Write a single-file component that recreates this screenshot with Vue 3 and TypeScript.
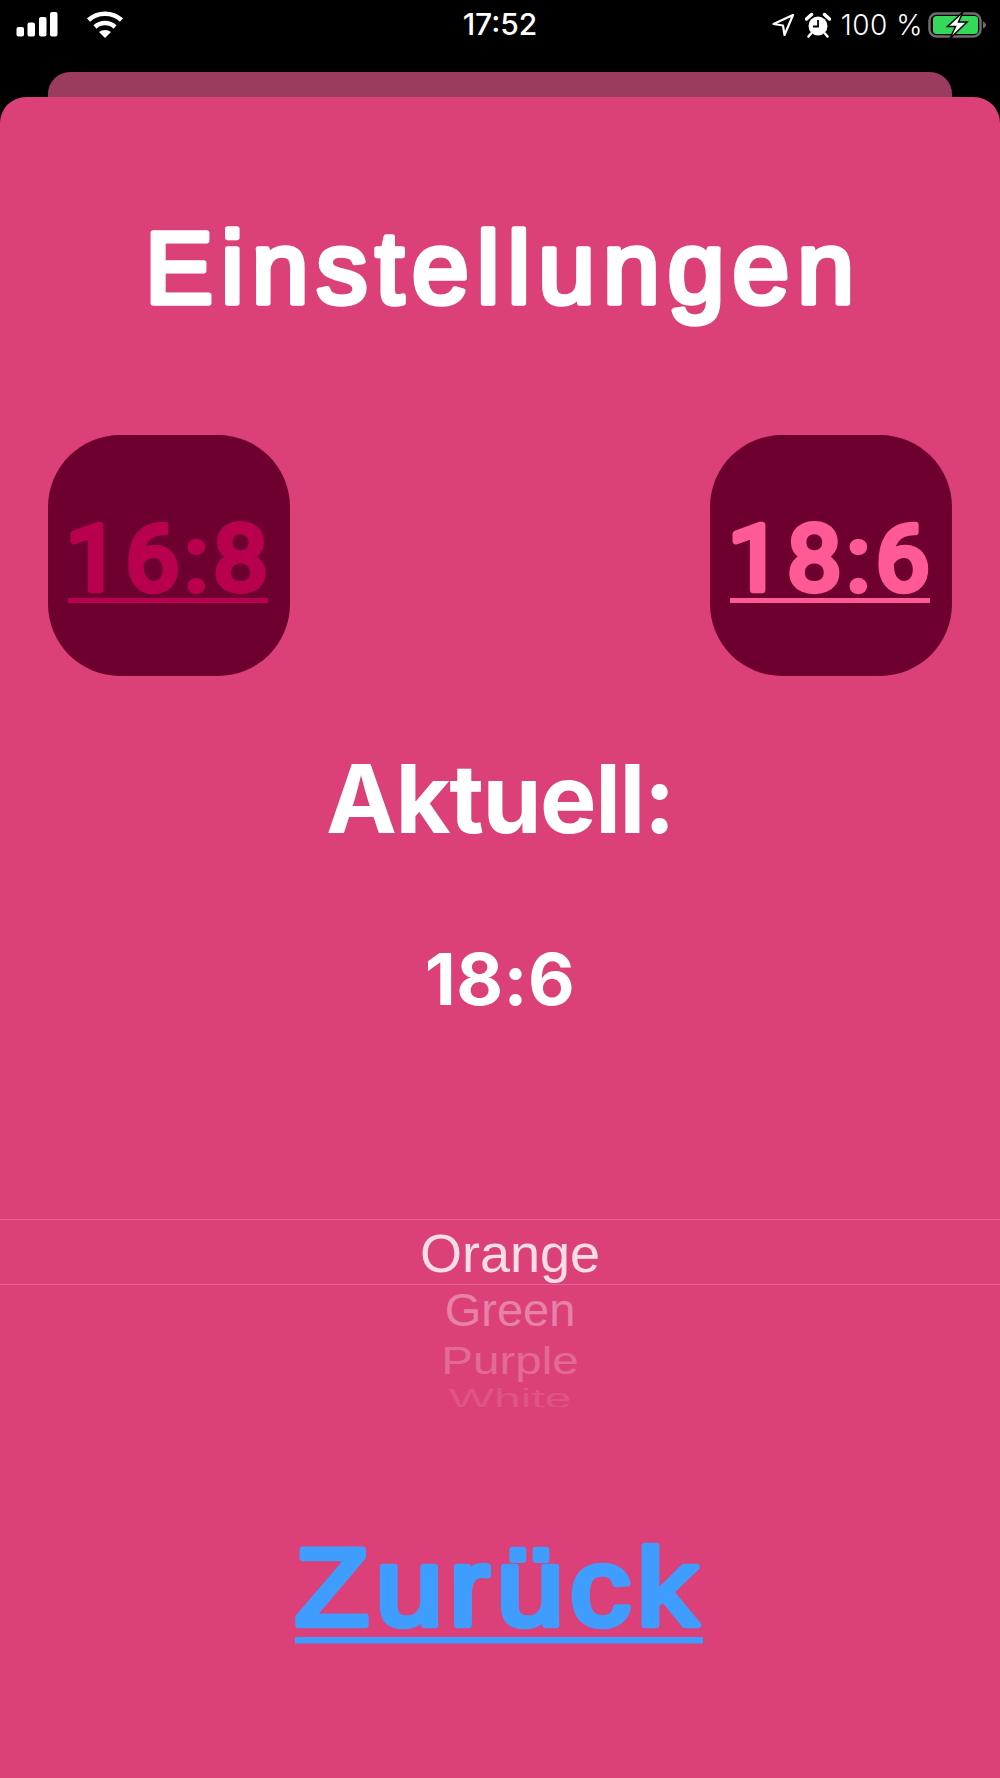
<template>
  <div class="screen">
    <div class="status-bar">
      <div class="status-left">
        <svg class="signal" width="42" height="25" viewBox="0 0 42 25">
          <rect x="0.500" y="15" width="7.500" height="9.500" rx="2" />
          <rect x="11.500" y="10.500" width="7.500" height="14" rx="2" />
          <rect x="23" y="5" width="7.500" height="19.500" rx="2" />
          <rect x="34" y="0" width="7.500" height="24.500" rx="2" />
        </svg>
        <svg class="wifi" width="38" height="28" viewBox="0 0 38 28">
          <path class="wifi-arc" d="M2.500 10C11.500 1.500 26.500 1.500 35.500 10" />
          <path class="wifi-arc" d="M9 17C14.500 11.800 23.500 11.800 29 17" />
          <path d="M13 22C16.500 19.200 21.500 19.200 25 22L19 28Z" fill="#fff" />
        </svg>
      </div>
      <div class="status-time">17:52</div>
      <div class="status-right">
        <svg class="arrow" width="24" height="24" viewBox="0 0 24 24">
          <path class="outline" d="M22 2 2.500 11 12 12.500 13.500 22Z" />
        </svg>
        <svg class="alarm" width="26" height="26" viewBox="0 0 26 26">
          <circle cx="13" cy="14" r="9.500" fill="#fff" />
          <path d="M13 8v6.500H8" class="clock-hand" />
          <path d="M1.500 7 6.500 2.500M24.500 7l-5-4.500" class="clock-bell" />
          <path d="M6 21.500l-2.500 3M20 21.500l2.500 3" class="clock-foot" />
        </svg>
        <span class="battery-text">100 %</span>
        <svg class="battery" width="60" height="28" viewBox="0 0 60 28">
          <rect x="1.500" y="2.500" width="51" height="23" rx="7" class="battery-shell" />
          <rect x="5" y="5" width="45" height="18" rx="3.500" fill="#34d85a" />
          <path d="M55 10.500c2 .8 3 2 3 3.500s-1 2.700-3 3.500Z" fill="#6d6d6d" />
          <path d="M35 1 19.500 15.500h8L22 27.500 39 11h-8.500L35 1Z" fill="#fff" stroke="#000" stroke-width="1.500" />
        </svg>
      </div>
    </div>

    <div class="sheet-back"></div>

    <main class="sheet">
      <svg class="title" width="720" height="140" viewBox="0 0 720 140">
        <text x="5" y="95" textLength="709" class="round">Einstellungen</text>
      </svg>

      <div class="ratio-row">
        <a class="ratio-btn is-off">
          <svg width="242" height="241" viewBox="0 0 242 241">
            <text transform="scale(1.06 1)" x="17" y="155" textLength="190" class="round digits">16:8</text>
            <rect x="20" y="163" width="200" height="5" />
          </svg>
        </a>
        <a class="ratio-btn is-on">
          <svg width="242" height="241" viewBox="0 0 242 241">
            <text transform="scale(1.06 1)" x="17" y="155" textLength="190" class="round digits">18:6</text>
            <rect x="20" y="163" width="200" height="5" />
          </svg>
        </a>
      </div>

      <h2 class="current-label">Aktuell:</h2>
      <p class="current-value">18:6</p>

      <div class="picker">
        <div class="picker-row">
          <span class="opt opt-1">Orange</span>
        </div>
        <span class="opt opt-2">Green</span>
        <span class="opt opt-3">Purple</span>
        <div class="opt-clip"><span class="opt opt-4">White</span></div>
      </div>

      <svg class="back-link" width="440" height="150" viewBox="0 0 440 150">
        <text transform="scale(1.1 1)" x="13.600" y="105" textLength="366" class="round back-text">Zurück</text>
        <rect x="15" y="117" width="408" height="6.500" />
      </svg>
    </main>
  </div>
</template>

<script setup lang="ts">
</script>

<style>
html, body { margin: 0; background: #000; }
</style>

<style scoped>
.screen {
  width: 1000px;
  height: 1778px;
  background: #000;
  overflow: hidden;
  display: flex;
  flex-direction: column;
  font-family: Inter, "Liberation Sans", sans-serif;
}
.status-bar {
  height: 72px;
  display: grid;
  grid-template-columns: 1fr auto 1fr;
  align-items: flex-start;
  padding: 12px 12px 0 16px;
  box-sizing: border-box;
  color: #fff;
}
.status-left { display: flex; gap: 28px; align-items: flex-start; }
.signal rect { fill: #fff; }
.wifi { margin-top: -2px; }
.wifi-arc { fill: none; stroke: #fff; stroke-width: 4.500; }
.status-time { font: 500 30px/24px Inter, sans-serif; margin-left: -4px; }
.status-right { display: flex; justify-content: flex-end; align-items: center; height: 28px; margin-top: -1px; }
.arrow { margin-right: 10px; }
.alarm { margin-right: 10px; }
.battery-text { font: 300 28px/30px Inter, sans-serif; letter-spacing: .5px; margin-right: 5px; }
.outline { fill: none; stroke: #fff; stroke-width: 2.200; stroke-linejoin: round; }
.clock-hand { fill: none; stroke: #000; stroke-width: 1.800; }
.clock-bell { fill: none; stroke: #fff; stroke-width: 3.500; stroke-linecap: round; }
.clock-foot { fill: none; stroke: #fff; stroke-width: 2.500; stroke-linecap: round; }
.battery-shell { fill: none; stroke: #6d6d6d; stroke-width: 2.500; }

.sheet-back {
  height: 25px;
  margin: 0 48px;
  background: #9c3b60;
  border-radius: 22px 22px 0 0;
}
.sheet {
  flex: 1;
  background: #db4078;
  border-radius: 26px 26px 0 0;
  display: flex;
  flex-direction: column;
  align-items: center;
  padding-top: 111px;
}
.round {
  font-family: "Liberation Sans", Arial, sans-serif;
  font-weight: 400;
  font-size: 102px;
  fill: #fff;
  stroke: #fff;
  stroke-width: 5.500px;
  stroke-linejoin: round;
  stroke-linecap: round;
}
.title { display: block; flex: none; }
.ratio-row {
  width: 904px;
  margin-top: 87px;
  display: flex;
  justify-content: space-between;
}
.ratio-btn {
  width: 242px;
  height: 241px;
  border-radius: 72px;
  background: #6d002e;
  overflow: hidden;
}
.ratio-btn svg { display: block; }
.digits { font-family: Roboto, "Liberation Sans", sans-serif; font-size: 90px; stroke-width: 6.500px; }
.is-off .round { fill: #b8004e; stroke: #b8004e; }
.is-off rect { fill: #b8004e; }
.is-on .round { fill: #ff5a96; stroke: #ff5a96; }
.is-on rect { fill: #ff5a96; }
.current-label {
  margin: 68px 0 0;
  font-size: 95px;
  line-height: 110px;
  font-weight: 700;
  letter-spacing: -1.500px;
  color: #fff;
}
.current-value {
  margin: 83px 0 0;
  font-size: 72px;
  line-height: 84px;
  font-weight: 700;
  letter-spacing: .5px;
  color: #fff;
}
.picker {
  width: 100%;
  margin-top: 198px;
  display: flex;
  flex-direction: column;
  align-items: center;
  font-family: "Liberation Sans", Arial, sans-serif;
  color: #fff;
}
.picker-row {
  width: 100%;
  height: 66px;
  padding-top: 2px;
  box-sizing: border-box;
  border-top: 1px solid rgba(255, 255, 255, .2);
  border-bottom: 1px solid rgba(255, 255, 255, .2);
  overflow: hidden;
}
.opt { display: block; text-align: center; line-height: 40px; margin-left: 20px; }
.opt-1 { font-size: 54px; line-height: 62px; opacity: .82; }
.opt-2 { font-size: 47px; opacity: .34; margin-top: 5px; transform: scaleY(.97); }
.opt-3 { font-size: 47.500px; opacity: .22; margin-top: 11px; transform: scaleY(.82); }
.opt-clip { height: 28px; overflow: hidden; margin-top: -2px; }
.opt-4 { font-size: 48px; opacity: .1; transform: scaleY(.58); }
.back-link { display: block; flex: none; margin-top: 113px; }
.back-link rect { fill: #3f9dff; }
.back-text {
  font-size: 110px;
  stroke-width: 6.500px;
  fill: #3f9dff;
  stroke: #3f9dff;
}
</style>
